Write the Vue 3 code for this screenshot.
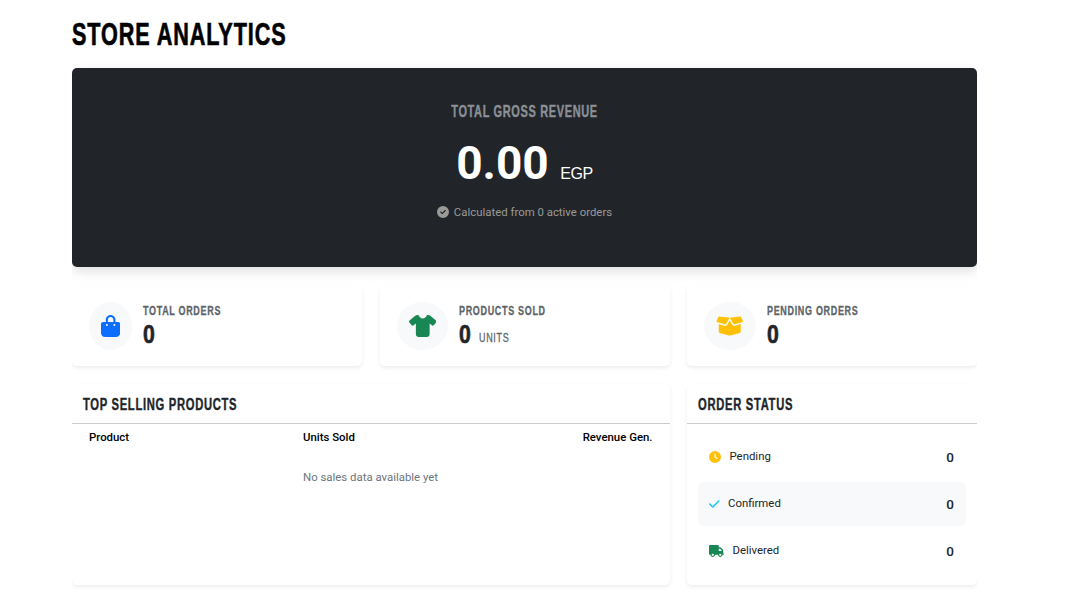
<template>
  <div class="page">
    <h1 class="title"><span class="squeeze">STORE ANALYTICS</span></h1>

    <section class="hero">
      <h2 class="hero-label">TOTAL GROSS REVENUE</h2>
      <div class="hero-value">0.00 <span class="currency">EGP</span></div>
      <p class="hero-note">
        <svg class="note-icon" viewBox="0 0 512 512"><path :d="icons.circleCheck" /></svg>
        Calculated from 0 active orders
      </p>
    </section>

    <div class="grid">
      <div v-for="stat in stats" :key="stat.label" class="card stat">
        <div class="stat-icon">
          <svg :viewBox="stat.box" :style="{ fill: stat.color }"><path :d="stat.path" /></svg>
        </div>
        <div>
          <div class="stat-label"><span class="squeeze">{{ stat.label }}</span></div>
          <div class="stat-value">
            <span class="stat-number">0</span>
            <span v-if="stat.unit" class="stat-unit">{{ stat.unit }}</span>
          </div>
        </div>
      </div>

      <div class="card panel wide">
        <h3 class="panel-title"><span class="squeeze">TOP SELLING PRODUCTS</span></h3>
        <table class="sales">
          <thead>
            <tr>
              <th>Product</th>
              <th>Units Sold</th>
              <th class="right">Revenue Gen.</th>
            </tr>
          </thead>
          <tbody>
            <tr>
              <td></td>
              <td colspan="2" class="empty">No sales data available yet</td>
            </tr>
          </tbody>
        </table>
      </div>

      <div class="card panel">
        <h3 class="panel-title"><span class="squeeze">ORDER STATUS</span></h3>
        <ul class="status-list">
          <li v-for="row in statuses" :key="row.label" class="status-row" :class="{ shaded: row.shaded }">
            <svg class="status-icon" :viewBox="row.box" :style="{ fill: row.color }"><path :d="row.path" /></svg>
            <span class="status-label">{{ row.label }}</span>
            <span class="status-count">0</span>
          </li>
        </ul>
      </div>
    </div>
  </div>
</template>

<script setup>
const icons = {
  circleCheck:
    "M256 512A256 256 0 1 0 256 0a256 256 0 1 0 0 512zM369 209L241 337c-9.4 9.4-24.6 9.4-33.9 0l-64-64c-9.4-9.4-9.4-24.6 0-33.9s24.6-9.4 33.9 0l47 47L335 175c9.4-9.4 24.6-9.4 33.9 0s9.4 24.6 0 33.9z",
  bag: "M160 112c0-35.3 28.7-64 64-64s64 28.7 64 64v48H160V112zm-48 48H48c-26.5 0-48 21.5-48 48V416c0 53 43 96 96 96H352c53 0 96-43 96-96V208c0-26.5-21.5-48-48-48H336V112C336 50.1 285.9 0 224 0S112 50.1 112 112v48zm24 48a24 24 0 1 1 0 48 24 24 0 1 1 0-48zm152 24a24 24 0 1 1 48 0 24 24 0 1 1 -48 0z",
  shirt:
    "M211.8 0c7.8 0 14.3 5.7 16.7 13.2C240.8 51.9 277.1 80 320 80s79.2-28.1 91.5-66.8C413.9 5.7 420.4 0 428.2 0h12.6c22.5 0 44.2 7.9 61.5 22.3L628.5 127.4c6.6 5.5 10.7 13.5 11.4 22.1s-2.1 17.1-7.8 23.6l-56 64c-11.4 13.1-31.2 14.6-44.6 3.5L480 197.7V448c0 35.3-28.7 64-64 64H224c-35.3 0-64-28.7-64-64V197.7l-51.5 42.9c-13.3 11.1-33.1 9.6-44.6-3.5l-56-64c-5.7-6.5-8.5-15-7.8-23.6s4.8-16.6 11.4-22.1L137.7 22.3C155 7.9 176.7 0 199.2 0h12.6z",
  box: "M58.9 42.1c3-6.1 9.6-9.6 16.3-8.7L320 64 564.8 33.4c6.7-.8 13.3 2.7 16.3 8.7l41.7 83.4c9 17.9-.6 39.6-19.8 45.1L439.6 217.3c-13.9 4-28.8-1.9-36.2-14.3L320 64 236.6 203c-7.4 12.4-22.3 18.3-36.2 14.3L37.1 170.6c-19.3-5.5-28.8-27.2-19.8-45.1L58.9 42.1zM321.1 128l54.9 91.4c14.9 24.8 44.6 36.6 72.5 28.6L576 211.6v167c0 22-15 41.2-36.4 46.6l-204.1 51c-10.2 2.6-20.9 2.6-31 0l-204.1-51C79 419.7 64 400.5 64 378.5v-167L191.6 248c27.8 8 57.6-3.8 72.5-28.6L318.9 128h2.2z",
  clock:
    "M256 0a256 256 0 1 1 0 512A256 256 0 1 1 256 0zM232 120V256c0 8 4 15.5 10.7 20l96 64c11 7.4 25.9 4.4 33.3-6.7s4.4-25.9-6.7-33.3L280 243.2V120c0-13.3-10.7-24-24-24s-24 10.7-24 24z",
  check:
    "M438.6 105.4c12.5 12.5 12.5 32.8 0 45.3l-256 256c-12.5 12.5-32.8 12.5-45.3 0l-128-128c-12.5-12.5-12.5-32.8 0-45.3s32.8-12.5 45.3 0L160 338.7 393.4 105.4c12.5-12.5 32.8-12.5 45.3 0z",
  truck:
    "M48 0C21.5 0 0 21.5 0 48V368c0 26.5 21.5 48 48 48H64c0 53 43 96 96 96s96-43 96-96H384c0 53 43 96 96 96s96-43 96-96h32c17.7 0 32-14.3 32-32s-14.3-32-32-32V288 256 237.3c0-17-6.7-33.3-18.7-45.3L512 114.7c-12-12-28.3-18.7-45.3-18.7H416V48c0-26.5-21.5-48-48-48H48zM416 160h50.7L544 237.3V256H416V160zM112 416a48 48 0 1 1 96 0 48 48 0 1 1 -96 0zm368-48a48 48 0 1 1 0 96 48 48 0 1 1 0-96z",
};

const stats = [
  { label: "TOTAL ORDERS", box: "0 0 448 512", path: icons.bag, color: "#0d6efd" },
  { label: "PRODUCTS SOLD", unit: "UNITS", box: "0 0 640 512", path: icons.shirt, color: "#198754" },
  { label: "PENDING ORDERS", box: "0 0 640 512", path: icons.box, color: "#ffc107" },
];

const statuses = [
  { label: "Pending", box: "0 0 512 512", path: icons.clock, color: "#ffc107" },
  { label: "Confirmed", box: "0 0 448 512", path: icons.check, color: "#0dcaf0", shaded: true },
  { label: "Delivered", box: "0 0 640 512", path: icons.truck, color: "#198754" },
];
</script>

<style>
html,
body {
  background: #fff;
}
</style>

<style scoped>
.page {
  width: 905px;
  margin-left: 72px;
  height: 603px;
  overflow: hidden;
  font-family: Roboto, sans-serif;
  color: #212529;
}

/* no condensed face installed, so the heading font is narrowed by hand */
.title,
.hero-label,
.stat-label,
.stat-number,
.stat-unit,
.panel-title {
  font-family: "Liberation Sans", sans-serif;
  font-weight: 700;
  white-space: nowrap;
}

.squeeze {
  display: inline-block;
  transform-origin: left center;
}

.title {
  margin: 0;
  height: 68px;
  padding-top: 16px;
  box-sizing: border-box;
  font-size: 32px;
  line-height: 37px;
  letter-spacing: 1.35px;
  color: #000;
  -webkit-text-stroke: 0.7px #000;
}

.title .squeeze {
  transform: scaleX(0.675);
}

.hero {
  height: 199px;
  box-sizing: border-box;
  padding-top: 34px;
  background: #212529;
  border-radius: 5px;
  box-shadow: 0 4px 12px rgba(0, 0, 0, 0.13);
  text-align: center;
  color: #fff;
}

.hero-label {
  margin: 0;
  font-size: 17px;
  line-height: 20px;
  letter-spacing: 1px;
  color: #8b9096;
  -webkit-text-stroke: 0.4px #8b9096;
  transform: scaleX(0.646);
}

.hero-value {
  margin-top: 12px;
  font-size: 46px;
  line-height: 58px;
  font-weight: 700;
}

.currency {
  font-family: "Liberation Sans", sans-serif;
  font-size: 16px;
  font-weight: 400;
  letter-spacing: -0.4px;
}

.hero-note {
  margin: 0;
  display: flex;
  align-items: center;
  justify-content: center;
  gap: 5px;
  font-size: 11.4px;
  line-height: 18px;
  color: #9a9a98;
}

.note-icon {
  width: 12px;
  height: 12px;
  fill: #9a9a98;
}

.grid {
  display: grid;
  grid-template-columns: 290px 290px 290px;
  column-gap: 17.5px;
  row-gap: 18px;
  margin-top: 18px;
}

.card {
  background: #fff;
  border-radius: 5px;
  box-shadow: 0 2px 4px rgba(0, 0, 0, 0.075);
}

.stat {
  height: 81px;
  box-sizing: border-box;
  padding: 16px 17px;
  display: flex;
  align-items: center;
  gap: 11px;
}

.stat-icon {
  padding: 13px 12px;
  border-radius: 50%;
  background: #f8f9fa;
  display: flex;
}

.stat-icon svg {
  height: 22px;
  display: block;
}

.stat-label {
  font-size: 13px;
  line-height: 16px;
  letter-spacing: 1px;
  color: #5c636a;
  -webkit-text-stroke: 0.3px #5c636a;
}

.stat-label .squeeze {
  transform: scaleX(0.69);
}

.stat-value {
  display: flex;
  align-items: baseline;
  margin-top: 1px;
  height: 29px;
  line-height: 29px;
}

.stat-number {
  display: inline-block;
  font-size: 25px;
  color: #212529;
  -webkit-text-stroke: 0.6px #212529;
  transform: scaleX(0.85);
  transform-origin: left center;
}

.stat-unit {
  display: inline-block;
  margin-left: 6px;
  font-size: 13px;
  font-weight: 400;
  letter-spacing: 1px;
  color: #5c636a;
  -webkit-text-stroke: 0.3px #5c636a;
  transform: translateY(-1px) scaleX(0.69);
  transform-origin: left center;
}

.panel {
  height: 201px;
}

.wide {
  grid-column: span 2;
}

.panel-title {
  margin: 0;
  height: 40px;
  box-sizing: border-box;
  padding: 11px 11px 0;
  font-size: 16px;
  line-height: 19px;
  letter-spacing: 1px;
  border-bottom: 1px solid #ccc;
  color: #212529;
  -webkit-text-stroke: 0.4px #212529;
}

.panel-title .squeeze {
  transform: scaleX(0.7);
}

.sales {
  width: 100%;
  border-collapse: collapse;
  font-size: 11.4px;
}

.sales th {
  padding: 3px 17px 0;
  height: 20px;
  text-align: left;
  font-weight: 500;
  color: #000;
}

.sales th.right {
  text-align: right;
}

.sales th:first-child {
  width: 180px;
}

.empty {
  padding: 23px 17px 0;
  color: #6c757d;
}

.status-list {
  list-style: none;
  margin: 0;
  padding: 11px 11px 0;
}

.status-row {
  display: flex;
  align-items: center;
  height: 44px;
  margin-bottom: 3px;
  padding: 0 12px 0 11px;
  border-radius: 5px;
  font-size: 11.4px;
}

.status-row.shaded {
  background: #f8f9fa;
}

.status-icon {
  height: 12px;
  margin-right: 8.5px;
  flex-shrink: 0;
}

.status-label {
  flex: 1;
  padding-bottom: 2px;
  color: #212529;
}

.status-count {
  font-weight: 500;
  font-size: 13.5px;
  color: #212529;
}
</style>
